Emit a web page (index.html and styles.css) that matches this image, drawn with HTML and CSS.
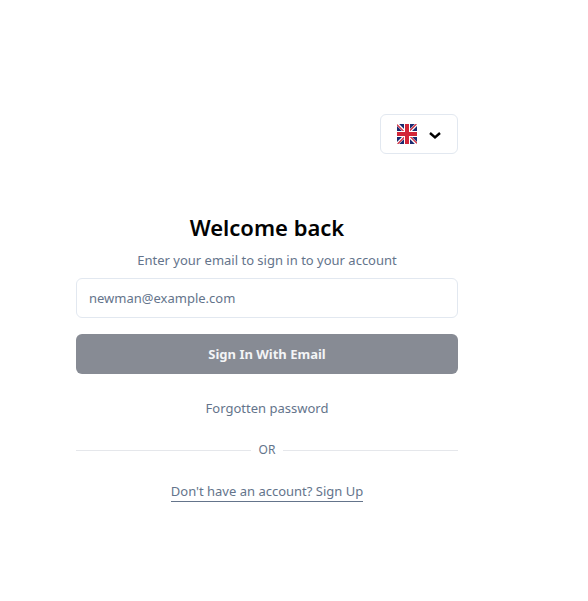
FILE: index.html
```html
<!DOCTYPE html>
<html lang="en">
<head>
<meta charset="utf-8">
<meta name="viewport" content="width=device-width, initial-scale=1">
<title>Sign in</title>
<link rel="stylesheet" href="styles.css">
</head>
<body>
<main class="page">
  <button class="language" type="button" aria-label="Language: English">
    <svg class="flag" viewBox="0 0 20 20" aria-hidden="true">
      <path fill="#1b2a70" d="M0 0h20v20H0z"/>
      <path stroke="#fff" stroke-width="3" d="M0 0l20 20M20 0L0 20"/>
      <path stroke="#d22638" stroke-width="1.2" d="M0 .6l9 9M19.4 0l-9 9M20 19.4l-9-9M.6 20l9-9"/>
      <path stroke="#fff" stroke-width="6" d="M10 0v20M0 10h20"/>
      <path stroke="#d22638" stroke-width="4" d="M10 0v20M0 10h20"/>
    </svg>
    <svg class="chevron" viewBox="0 0 12 12" aria-hidden="true">
      <path d="M1 4l5 4.500L11 4"/>
    </svg>
  </button>
  <form class="sign-in">
    <h1 class="title">Welcome back</h1>
    <p class="subtitle">Enter your email to sign in to your account</p>
    <input class="email" type="email" placeholder="newman@example.com" aria-label="Email">
    <button class="submit" type="button">Sign In With Email</button>
  </form>
  <a class="link" href="#">Forgotten password</a>
  <div class="divider">OR</div>
  <a class="link underlined" href="#">Don't have an account? Sign Up</a>
</main>
</body>
</html>
```
FILE: styles.css
```css
* {
  box-sizing: border-box;
}

body {
  margin: 0;
  background: #fff;
  color: #64748b;
  font: 13px/20px "Segoe UI", "Noto Sans", sans-serif;
}

.page {
  display: flex;
  flex-direction: column;
  align-items: center;
  padding: 114px 130px 96px 76px;
}

.language {
  display: flex;
  align-items: center;
  align-self: flex-end;
  gap: 12px;
  height: 40px;
  padding: 0 16px;
  border: 1px solid #e2e8f0;
  border-radius: 6px;
  background: #fff;
}

.flag {
  width: 20px;
  height: 20px;
}

.chevron {
  width: 12px;
  height: 12px;
  margin-top: 2px;
  fill: none;
  stroke: #000;
  stroke-width: 2.4;
}

.sign-in {
  display: flex;
  flex-direction: column;
  width: 100%;
  margin-top: 57px;
  text-align: center;
}

.title {
  margin: 0;
  color: #020202;
  font-size: 22px;
  font-weight: 600;
  line-height: 32px;
}

.subtitle {
  margin: 7px 0 8px;
}

.email {
  width: 100%;
  height: 40px;
  padding: 0 12px;
  border: 1px solid #e2e8f0;
  border-radius: 6px;
  background: #fff;
  color: inherit;
  font: inherit;
}

.email::placeholder {
  color: #64748b;
}

.submit {
  height: 40px;
  margin-top: 16px;
  border: 0;
  border-radius: 6px;
  background: #878b94;
  color: #f3f4f6;
  font: inherit;
  font-weight: 700;
}

.link {
  margin-top: 24px;
  color: inherit;
  text-decoration: none;
}

.divider {
  display: flex;
  align-items: center;
  gap: 8px;
  width: 100%;
  margin-top: 24px;
  font-size: 12px;
  line-height: 16px;
}

.divider::before,
.divider::after {
  content: "";
  flex: 1;
  height: 1px;
  background: #e5e7eb;
}

.underlined {
  border-bottom: 1px solid #64748b;
  line-height: 19px;
}
```
